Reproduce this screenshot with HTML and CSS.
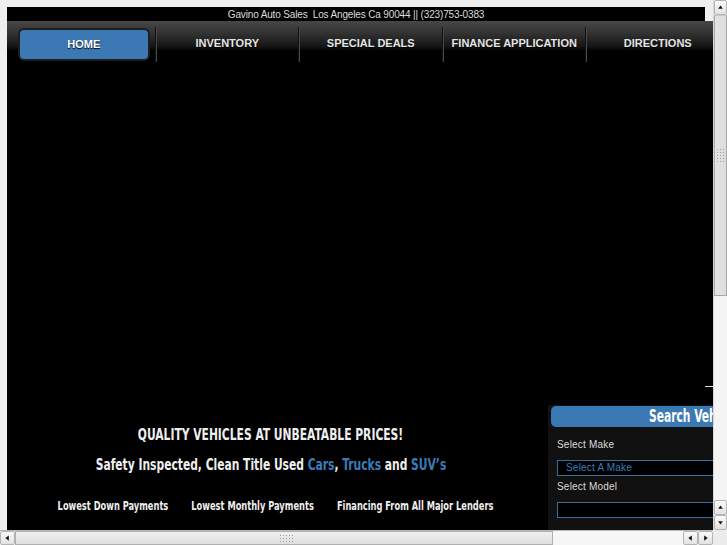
FILE: index.html
```html
<!DOCTYPE html>
<html>
<head>
<meta charset="utf-8">
<title>Gavino Auto Sales</title>
<link rel="stylesheet" href="styles.css">
</head>
<body>
<div class="window">
  <div class="viewport">
    <div class="page">
      <div class="topbar">Gavino Auto Sales&nbsp; Los Angeles Ca 90044 || (323)753-0383</div>
      <nav class="nav">
        <a class="nav-item active"><span class="btn">HOME</span></a>
        <a class="nav-item">INVENTORY</a>
        <a class="nav-item">SPECIAL DEALS</a>
        <a class="nav-item">FINANCE APPLICATION</a>
        <a class="nav-item">DIRECTIONS</a>
      </nav>
      <div class="hero">
        <div class="hero-main">
          <div class="tick"></div>
          <h1 class="headline">QUALITY VEHICLES AT UNBEATABLE PRICES!</h1>
          <p class="subline">Safety Inspected, Clean Title Used <em>Cars</em>, <em>Trucks</em> and <em>SUV’s</em></p>
          <ul class="perks">
            <li>Lowest Down Payments</li>
            <li>Lowest Monthly Payments</li>
            <li>Financing From All Major Lenders</li>
          </ul>
        </div>
        <aside class="search">
          <div class="search-head"><span>Search Vehicles</span></div>
          <div class="search-body">
            <label class="lbl">Select Make</label>
            <div class="sel">Select A Make</div>
            <label class="lbl">Select Model</label>
            <div class="sel"></div>
          </div>
        </aside>
      </div>
    </div>
  </div>
  <div class="vscroll">
    <div class="sbtn"><svg viewBox="0 0 14 15" width="14" height="15"><polygon points="4,9 10,9 7,5" fill="#111"/></svg></div>
    <div class="vthumb"><div class="grip vgrip"></div></div>
    <div class="vtrack"></div>
    <div class="sbtn"><svg viewBox="0 0 14 15" width="14" height="15"><polygon points="4,9 10,9 7,5" fill="#111"/></svg></div>
    <div class="sbtn"><svg viewBox="0 0 14 15" width="14" height="15"><polygon points="4,6 10,6 7,10" fill="#111"/></svg></div>
  </div>
  <div class="hscroll">
    <div class="sbtn h"><svg viewBox="0 0 15 15" width="15" height="15"><polygon points="9,4 9,10 5,7" fill="#111"/></svg></div>
    <div class="hthumb"><div class="grip hgrip"></div></div>
    <div class="htrack"></div>
    <div class="sbtn h"><svg viewBox="0 0 15 15" width="15" height="15"><polygon points="9,4 9,10 5,7" fill="#111"/></svg></div>
    <div class="sbtn h"><svg viewBox="0 0 15 15" width="15" height="15"><polygon points="6,4 6,10 10,7" fill="#111"/></svg></div>
  </div>
  <div class="corner"></div>
</div>
</body>
</html>
```

FILE: styles.css
```css
html, body {
  margin: 0;
  padding: 0;
  width: 727px;
  height: 545px;
  overflow: hidden;
  background: #efefef;
}

.window {
  display: grid;
  grid-template-columns: 713px 14px;
  grid-template-rows: 530px 15px;
  width: 727px;
  height: 545px;
}

.viewport {
  overflow: hidden;
  background: #efefef;
  padding: 7px 0 0 7px;
  box-sizing: border-box;
}

.page {
  width: 1000px;
}

.topbar {
  width: 698px;
  height: 14px;
  background: #000;
  color: #dcdcdc;
  font: 10px/15px "Liberation Sans", Arial, sans-serif;
  letter-spacing: -0.15px;
  text-align: center;
  white-space: nowrap;
}

.nav {
  display: flex;
  height: 41px;
  padding-left: 5px;
  background: linear-gradient(#474747 0px, #333 12px, #161616 25px, #000 30px);
}

.nav-item {
  display: flex;
  align-items: center;
  justify-content: center;
  width: 143.5px;
  height: 41px;
  padding-top: 3px;
  box-sizing: border-box;
  color: #e6e6e6;
  font: bold 11px "Liberation Sans", Arial, sans-serif;
  text-shadow: 0 1px 1px #000;
  white-space: nowrap;
  position: relative;
}

.nav-item + .nav-item::before {
  content: "";
  position: absolute;
  left: 0;
  top: 6px;
  bottom: 0;
  width: 1px;
  background: #4a4a4a;
  box-shadow: -1px 0 0 #111;
}

.nav-item.active {
  padding: 7px 6px 1px 6px;
  align-items: stretch;
}

.btn {
  flex: 1;
  display: flex;
  align-items: center;
  justify-content: center;
  padding-bottom: 2px;
  background: #3c79b4;
  border: 2px solid #1e1e1e;
  border-radius: 6px;
  color: #fff;
}

.hero {
  display: flex;
  width: 706px;
  height: 468px;
  background: #000;
}

.hero-main {
  width: 541px;
  flex: none;
  position: relative;
  padding-top: 362px;
  box-sizing: border-box;
  text-align: center;
  font-family: "DejaVu Sans Condensed", "DejaVu Sans", sans-serif;
  font-weight: bold;
  color: #efefef;
}

.tick {
  position: absolute;
  right: -165px;
  top: 324px;
  width: 8px;
  height: 1px;
  background: #ddd;
}

.headline {
  margin: 0 0 0 -14px;
  font-size: 16px;
  line-height: 22px;
  font-weight: bold;
  white-space: nowrap;
  transform: scaleX(0.746);
}

.subline {
  margin: 8px 0 0 -13px;
  font-size: 16px;
  line-height: 22px;
  white-space: nowrap;
  transform: scaleX(0.745);
}

.subline em {
  font-style: normal;
  color: #3b7cb8;
}

.perks {
  list-style: none;
  margin: 22px 0 0 -4px;
  padding: 0;
  display: flex;
  justify-content: center;
  gap: 30px;
  font-size: 12px;
  line-height: 16px;
  white-space: nowrap;
  transform: scaleX(0.768);
}

.search {
  flex: 1;
  margin-top: 343px;
  background: #111;
  color: #dcdcdc;
  font: 10px "Liberation Sans", Arial, sans-serif;
  min-width: 0;
}

.search-head {
  margin: 1px 0 0 3px;
  height: 21px;
  width: 240px;
  background: #3b79b4;
  border-radius: 5px 0 0 5px;
  color: #fff;
  font: bold 17px/21px "DejaVu Sans Condensed", "DejaVu Sans", sans-serif;
  padding-left: 98px;
  box-sizing: border-box;
  white-space: nowrap;
}

.search-head span {
  display: inline-block;
  transform: scaleX(0.7);
  transform-origin: left center;
}

.search-body {
  padding: 11px 0 0 9px;
}

.lbl {
  display: block;
  height: 14px;
  line-height: 14px;
  letter-spacing: 0.2px;
}

.sel {
  margin: 8px 0 4px 0;
  height: 16px;
  width: 240px;
  box-sizing: border-box;
  border: 1px solid #3a6e9f;
  background: #000;
  color: #3b7cb8;
  line-height: 14px;
  padding-left: 8px;
  letter-spacing: 0.2px;
}

.vscroll {
  display: flex;
  flex-direction: column;
  background: #f3f3f3;
  border-left: 1px solid #d6d6d6;
  box-sizing: border-box;
}

.sbtn {
  height: 15px;
  flex: none;
  box-sizing: border-box;
  border: 1px solid #b4b4b4;
  border-radius: 2px;
  background: linear-gradient(#fafafa, #e2e2e2);
  display: flex;
  align-items: center;
  justify-content: center;
}

.sbtn svg { display: block; }

.vthumb {
  height: 281px;
  flex: none;
  background: linear-gradient(90deg, #e4e4e4, #dcdcdc);
  border: 1px solid #a8a8a8;
  border-top-color: #c8c8c8;
  box-sizing: border-box;
  display: flex;
  align-items: center;
  justify-content: center;
}

.vtrack {
  flex: 1;
  background: #f4f4f4;
}

.hscroll {
  display: flex;
  background: #f3f3f3;
  border-top: 1px solid #b8b8b8;
  box-sizing: border-box;
}

.sbtn.h {
  width: 15px;
  height: auto;
}

.hthumb {
  width: 538px;
  flex: none;
  background: linear-gradient(#f0f0f0, #dedede);
  border: 1px solid #b0b0b0;
  box-sizing: border-box;
  display: flex;
  align-items: center;
  justify-content: center;
}

.htrack {
  flex: 1;
  background: #f6f6f6;
}

.grip {
  background-image: radial-gradient(circle, #9a9a9a 0.8px, transparent 1px);
  background-size: 3px 3px;
}

.vgrip {
  width: 9px;
  height: 16px;
}

.hgrip {
  width: 16px;
  height: 9px;
  margin-left: 6px;
}

.corner {
  background: #ececec;
}
```
